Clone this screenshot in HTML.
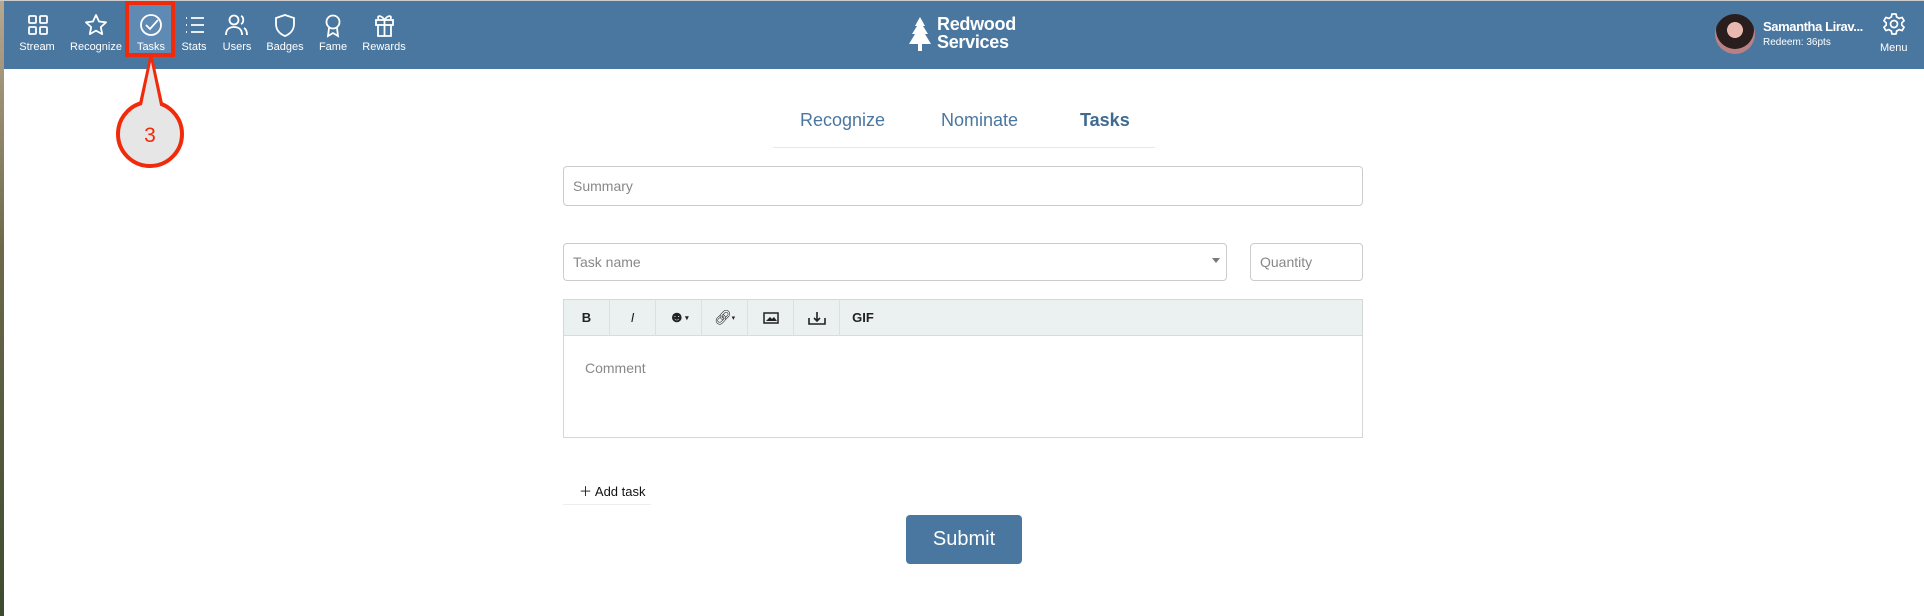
<!DOCTYPE html>
<html><head><style>
*{box-sizing:border-box;margin:0;padding:0}
body{width:1924px;height:616px;overflow:hidden;background:#fff;font-family:"Liberation Sans",sans-serif;position:relative}
.side{position:absolute;left:0;top:0;width:4px;height:616px;background:linear-gradient(#b8a890,#6d6a4a 40%,#3d4a30)}
.nav{position:absolute;left:4px;top:1px;width:1920px;height:68px;background:#4a77a0}
.top{position:absolute;left:0;top:0;width:1924px;height:1px;background:#ccc}
.ni{position:absolute;top:0;height:68px;color:#fff;font-size:11px;text-align:center;transform:translateX(-50%)}
.ni span{position:absolute;top:41px;left:50%;transform:translateX(-50%);white-space:nowrap}
.abs{position:absolute}
.inp{position:absolute;border:1px solid #ccc;border-radius:4px;color:#888;font-size:14px;padding-left:9px;display:flex;align-items:center}
.tb{position:absolute;top:299px;height:37px;display:flex;align-items:center;justify-content:center;border-right:1px solid #dde;font-size:13px;font-weight:bold;color:#222}
</style></head><body>
<div class="side"></div><div class="top"></div>
<div class="nav">
<div class="abs" style="left:122px;top:4px;width:47px;height:50px;background:#5f8ab4"></div>
</div>
<svg class="abs" style="left:0;top:0" width="420" height="70" fill="none" stroke="#fff" stroke-width="1.8">
<g transform="translate(28,15)"><rect x="1" y="1" width="7" height="7" rx="1"/><rect x="12" y="1" width="7" height="7" rx="1"/><rect x="1" y="12" width="7" height="7" rx="1"/><rect x="12" y="12" width="7" height="7" rx="1"/></g>
<path d="M96 15l3 6.5 7 .8-5.2 4.8 1.4 7-6.2-3.5-6.2 3.5 1.4-7-5.2-4.8 7-.8z" stroke-linejoin="round"/>
<circle cx="151" cy="25" r="10"/><path d="M146 25l4 4 8-9"/>
<path d="M186 18h1M186 25h1M186 32h1M191 18h13M191 25h13M191 32h13"/>
<circle cx="234" cy="20" r="4.5"/><path d="M226 35c0-6 4-8 8-8s8 2 8 8M241 16c3 1 3 7 0 8M244 28c2 1 3 3 3 7"/>
<path d="M285 15l9 3v6c0 6-4 10-9 12-5-2-9-6-9-12v-6z"/>
<circle cx="333" cy="22" r="6.5"/><path d="M329 28l-1 8 5-3 5 3-1-8"/>
<rect x="376" y="20" width="17" height="5"/><path d="M378 25v11h13V25M384.5 20v16M384.5 20c-3-5-8-5-6-1M384.5 20c3-5 8-5 6-1"/>
</svg>
<div class="ni" style="left:37px"><span>Stream</span></div>
<div class="ni" style="left:96px"><span>Recognize</span></div>
<div class="ni" style="left:151px"><span>Tasks</span></div>
<div class="ni" style="left:194px"><span>Stats</span></div>
<div class="ni" style="left:237px"><span>Users</span></div>
<div class="ni" style="left:285px"><span>Badges</span></div>
<div class="ni" style="left:333px"><span>Fame</span></div>
<div class="ni" style="left:384px"><span>Rewards</span></div>
<!-- callout -->
<svg class="abs" style="left:110px;top:0" width="90" height="175">
<rect x="17" y="3" width="46" height="52" fill="none" stroke="#f02a0a" stroke-width="4"/>
<path d="M30 108L41 58 52 108" fill="#e6e6e6" stroke="#f02a0a" stroke-width="4" stroke-linejoin="round"/>
<circle cx="40" cy="134" r="32" fill="#e6e6e6" stroke="#f02a0a" stroke-width="4"/>
<path d="M31 110L41 62 51 110z" fill="#e6e6e6"/>
<text x="40" y="142" text-anchor="middle" font-size="21" fill="#f02a0a" font-family="Liberation Sans">3</text>
</svg>
<!-- logo -->
<svg class="abs" style="left:909px;top:17px" width="22" height="36"><path d="M11 0L6 9h2L3 17h3L0 27h9v7h4v-7h9L16 17h3L14 9h2z" fill="#fff"/></svg>
<div class="abs" style="left:937px;top:15px;color:#fff;font-weight:bold;font-size:18px;line-height:18px;letter-spacing:-.3px">Redwood<br>Services</div>
<!-- user -->
<div class="abs" style="left:1715px;top:14px;width:40px;height:40px;border-radius:50%;background:radial-gradient(circle at 50% 40%,#e9b9b0 0 25%,#2a1d1e 26% 60%,#b98085 61%)"></div>
<div class="abs" style="left:1763px;top:19px;color:#fff;font-weight:bold;font-size:13px;letter-spacing:-.4px">Samantha Lirav...</div>
<div class="abs" style="left:1763px;top:37px;color:#fff;font-size:10px">Redeem: 36pts</div>
<svg class="abs" style="left:1882px;top:12px" width="24" height="24" fill="none" stroke="#fff" stroke-width="1.7"><circle cx="12" cy="12" r="3.5"/><path d="M10 2h4l.7 3 2.4 1.4 3-1 2 3.4-2.3 2.1v2.2l2.3 2.1-2 3.4-3-1-2.4 1.4-.7 3h-4l-.7-3-2.4-1.4-3 1-2-3.4 2.3-2.1v-2.2L1.9 8.8l2-3.4 3 1L9.3 5z" stroke-linejoin="round"/></svg>
<div class="abs" style="left:1880px;top:42px;color:#fff;font-size:11px">Menu</div>
<!-- tabs -->
<div class="abs" style="left:773px;top:147px;width:382px;height:1px;background:#e8e8e8"></div>
<div class="abs" style="left:800px;top:110px;font-size:18px;color:#4a77a0">Recognize</div>
<div class="abs" style="left:941px;top:110px;font-size:18px;color:#4a77a0">Nominate</div>
<div class="abs" style="left:1080px;top:110px;font-size:18px;color:#3f6a92;font-weight:bold">Tasks</div>
<!-- form -->
<div class="inp" style="left:563px;top:166px;width:800px;height:40px">Summary</div>
<div class="inp" style="left:563px;top:243px;width:664px;height:38px">Task name<span style="position:absolute;right:6px;top:14px;border:4px solid transparent;border-top:5px solid #777"></span></div>
<div class="inp" style="left:1250px;top:243px;width:113px;height:38px">Quantity</div>
<div class="abs" style="left:563px;top:299px;width:800px;height:139px;border:1px solid #d6d6d6"></div>
<div class="abs" style="left:564px;top:300px;width:798px;height:36px;background:#ebf0f0;border-bottom:1px solid #d6dcdc"></div>
<div class="tb" style="left:564px;width:46px">B</div>
<div class="tb" style="left:610px;width:46px;font-style:italic;font-weight:normal">I</div>
<div class="tb" style="left:656px;width:46px;font-size:16px">☻<small style="font-size:7px">▾</small></div>
<div class="tb" style="left:702px;width:46px;font-weight:normal;font-size:14px">🔗︎<small style="font-size:7px">▾</small></div>
<div class="tb" style="left:748px;width:46px"><svg width="16" height="12"><rect x="1" y="1" width="14" height="10" fill="none" stroke="#222" stroke-width="1.5"/><path d="M3 9l4-4 2 2 2-2 3 4z" fill="#222"/></svg></div>
<div class="tb" style="left:794px;width:46px"><svg width="18" height="14" fill="none" stroke="#222" stroke-width="1.6"><path d="M1 7v6h16V7M9 1v9M6 7l3 3 3-3"/></svg></div>
<div class="tb" style="left:840px;width:46px;border:none">GIF</div>
<div class="abs" style="left:585px;top:360px;font-size:14px;color:#888">Comment</div>
<div class="abs" style="left:579px;top:481px;font-size:13px;color:#111">＋ Add task</div>
<div class="abs" style="left:563px;top:504px;width:88px;height:1px;background:#eee"></div>
<div class="abs" style="left:906px;top:515px;width:116px;height:49px;background:#4a77a0;border-radius:4px;color:#fff;font-size:20px;display:flex;align-items:center;justify-content:center">Submit</div>
</body></html>
